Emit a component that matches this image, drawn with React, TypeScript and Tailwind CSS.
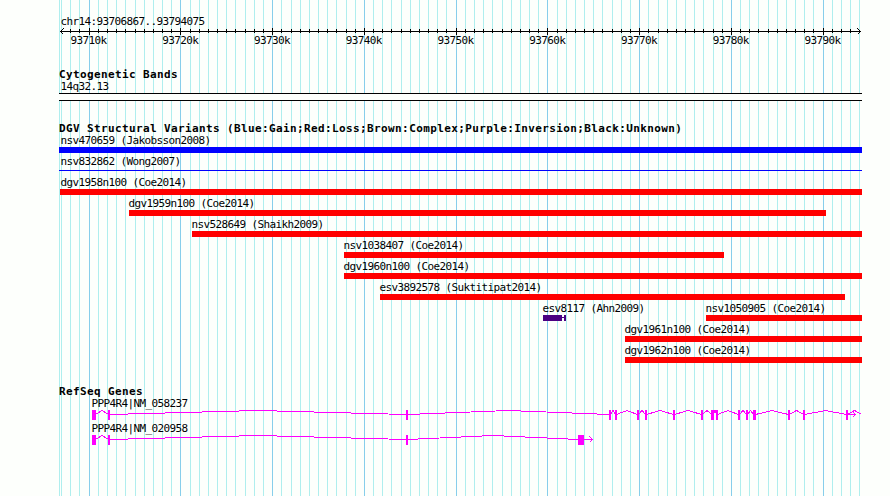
import React from 'react';

interface Segment {
  start: number;
  end: number;
}

interface Feature extends Segment {
  label: string;
  kind: 'gain' | 'thinGain' | 'loss' | 'inversion';
}

interface Gene {
  label: string;
  exons: number[][];
  arrow: number;
  tail?: number;
}

const LEFT = 59;
const KB = Array.from({ length: 88 }, (_, i) => i - 3);

// pixel column of a 1 kb step, counted from 93710k
const column = (i: number) => Math.floor(89.15 + 9.175 * i);

const rows: Feature[][] = [
  [{ label: 'nsv470659 (Jakobsson2008)', start: 59, end: 862, kind: 'gain' }],
  [{ label: 'nsv832862 (Wong2007)', start: 59, end: 862, kind: 'thinGain' }],
  [{ label: 'dgv1958n100 (Coe2014)', start: 60, end: 862, kind: 'loss' }],
  [{ label: 'dgv1959n100 (Coe2014)', start: 129, end: 826, kind: 'loss' }],
  [{ label: 'nsv528649 (Shaikh2009)', start: 192, end: 862, kind: 'loss' }],
  [{ label: 'nsv1038407 (Coe2014)', start: 344, end: 724, kind: 'loss' }],
  [{ label: 'dgv1960n100 (Coe2014)', start: 344, end: 862, kind: 'loss' }],
  [{ label: 'esv3892578 (Suktitipat2014)', start: 380, end: 845, kind: 'loss' }],
  [
    { label: 'esv8117 (Ahn2009)', start: 543, end: 566, kind: 'inversion' },
    { label: 'nsv1050905 (Coe2014)', start: 706, end: 862, kind: 'loss' },
  ],
  [{ label: 'dgv1961n100 (Coe2014)', start: 625, end: 862, kind: 'loss' }],
  [{ label: 'dgv1962n100 (Coe2014)', start: 625, end: 862, kind: 'loss' }],
];

const genes: Gene[] = [
  {
    label: 'PPP4R4|NM_058237',
    exons: [
      [92, 96], [108, 110], [406, 408], [609, 611], [615, 617], [637, 639], [645, 647],
      [673, 675], [701, 703], [711, 714], [716, 718], [738, 740], [746, 748], [753, 756],
      [788, 790], [803, 805], [846, 848],
    ],
    arrow: 855,
    tail: 861,
  },
  {
    label: 'PPP4R4|NM_020958',
    exons: [[92, 96], [108, 110], [406, 408], [578, 584]],
    arrow: 592,
  },
];

const small = "font-['DejaVu_Sans_Mono',monospace] text-[11px] tracking-[-0.62px] leading-[13px] whitespace-pre";
const bold = "font-['DejaVu_Sans_Mono',monospace] text-[11px] tracking-[0.38px] leading-[13px] font-bold whitespace-pre";

const Grid: React.FC = () => (
  <svg className="absolute inset-0" width="890" height="496" shapeRendering="crispEdges">
    <rect x={LEFT} y="0" width="1" height="496" fill="#afeeee" />
    {KB.map(i => (
      <rect key={i} x={column(i)} y="0" width="1" height="496" fill={i % 10 === 0 ? '#87ceeb' : '#afeeee'} />
    ))}
  </svg>
);

const Ruler: React.FC = () => (
  <div className="relative h-[53px]">
    <div className={`${small} pt-[15px] pl-[60.5px]`}>chr14:93706867..93794075</div>
    <svg className="absolute left-0 top-[27px]" width="890" height="9" shapeRendering="crispEdges">
      <rect x="60" y="4" width="801" height="1" />
      {KB.filter(i => i > -3 && i < 84).map(i => (
        <rect key={i} x={column(i)} y={i % 10 === 0 ? 1 : 2} width="1" height={i % 10 === 0 ? 7 : 4} />
      ))}
      <path d="M63.5 1.5L60.5 4.5L63.5 7.5M857.5 1.5L860.5 4.5L857.5 7.5" fill="none" stroke="#000" />
    </svg>
    <div className="flex pl-[70.5px] pt-[6px]">
      {[1, 2, 3, 4, 5, 6, 7, 8, 9].map(n => (
        <span key={n} className={`${small} w-[91.75px] shrink-0`}>{`937${n}0k`}</span>
      ))}
    </div>
  </div>
);

const Title: React.FC<{ text: string }> = ({ text }) => (
  <div className={`${bold} h-[12px] pl-[59px]`}>{text}</div>
);

const Glyph: React.FC<{ kind: Feature['kind'] }> = ({ kind }) => {
  if (kind === 'inversion') {
    return (
      <div className="flex h-[6px]">
        <div className="w-[19px] bg-[#4b0082]" />
        <div className="mt-[2px] h-px w-[2px] bg-[#4b0082]" />
        <div className="w-[2px] bg-[#4b0082]" />
      </div>
    );
  }
  if (kind === 'thinGain') return <div className="mt-[2px] h-px bg-[#0000ff]" />;
  return <div className={`h-[6px] ${kind === 'gain' ? 'bg-[#0000ff]' : 'bg-[#ff0000]'}`} />;
};

const VariantRow: React.FC<{ features: Feature[] }> = ({ features }) => (
  <div className="flex h-[21px]">
    {features.map((f, i) => (
      <div
        key={f.label}
        className="shrink-0"
        style={{ marginLeft: f.start - (i > 0 ? features[i - 1].end : 0), width: f.end - f.start }}
      >
        <div className={`${small} h-[13px] ${f.start === LEFT ? 'ml-[1.5px]' : f.start === 60 ? 'ml-[0.5px]' : 'ml-[-0.5px]'}`}>
          {f.label}
        </div>
        <Glyph kind={f.kind} />
      </div>
    ))}
  </div>
);

// introns rise from the centre line to a peak half way between two exons
const intron = (from: number, to: number) => {
  const a = from - 0.5;
  const b = to + 0.5;
  return `M${a} 4.5L${(a + b) / 2} 0.5L${b} 4.5`;
};

const GeneRow: React.FC<{ gene: Gene }> = ({ gene }) => {
  const { exons, arrow, tail } = gene;
  const last = exons[exons.length - 1][1];
  const path = exons.slice(1).map(([start], i) => intron(exons[i][1], start)).join('');
  return (
    <div className="h-[25px]">
      <div className={`${small} h-[13px] pl-[91.5px]`}>{gene.label}</div>
      <svg className="block" width="890" height="10" shapeRendering="crispEdges">
        <path d={path} fill="none" stroke="#ff00ff" />
        {tail && <path d={intron(last, tail)} fill="none" stroke="#ff00ff" />}
        {exons.map(([start, end]) => (
          <rect key={start} x={start} y="0" width={end - start} height="10" fill="#ff00ff" />
        ))}
        <rect x={last} y="4" width={arrow - last} height="1" fill="#ff00ff" />
        <path
          d={`M${arrow - 2.5} 1.5L${arrow + 0.5} 4.5L${arrow - 2.5} 7.5`}
          fill="none"
          stroke="#ff00ff"
        />
      </svg>
    </div>
  );
};

const App: React.FC = () => (
  <div className="relative h-[496px] w-[890px] overflow-hidden bg-[#fdfffc] text-black">
    <Grid />
    <div className="relative">
      <Ruler />

      <div className="pt-[15px]">
        <Title text="Cytogenetic Bands" />
        <div className={`${small} pl-[60.5px]`}>14q32.13</div>
        <div className="ml-[59px] h-[8px] w-[803px] border-y border-black bg-[#fdfffc]" />
      </div>

      <div className="pt-[21px]">
        <Title text="DGV Structural Variants (Blue:Gain;Red:Loss;Brown:Complex;Purple:Inversion;Black:Unknown)" />
        {rows.map(features => <VariantRow key={features[0].label} features={features} />)}
      </div>

      <div className="pt-[20px]">
        <Title text="RefSeq Genes" />
        {genes.map(gene => <GeneRow key={gene.label} gene={gene} />)}
      </div>
    </div>
  </div>
);

export default App;
